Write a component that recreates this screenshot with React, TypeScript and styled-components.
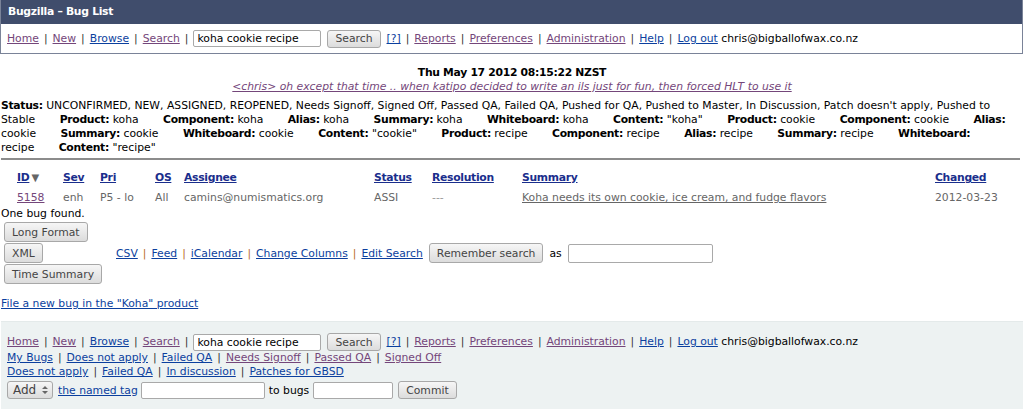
import React from 'react';
import styled, { createGlobalStyle } from 'styled-components';

const GlobalStyle = createGlobalStyle`
  body {
    margin: 0;
    background: #fff;
    font-family: "DejaVu Sans", Verdana, sans-serif;
    font-size: 10.8px;
    color: #000;
  }
`;

const Link = styled.a<{ $visited?: boolean; $bold?: boolean }>`
  color: ${({ $visited }) => ($visited ? '#74467a' : '#0b3f9e')};
  font-weight: ${({ $bold }) => ($bold ? 'bold' : 'normal')};
  letter-spacing: ${({ $bold }) => ($bold ? '-0.3px' : 'normal')};
  text-decoration: underline;
  cursor: pointer;
`;

const Sep = styled.span<{ $accent?: boolean }>`
  margin: 0 5px;
  color: ${({ $accent }) => ($accent ? '#b8692a' : '#333')};
`;

const Header = styled.div`
  border: 1px solid #7a8398;
  border-top: none;
  margin-right: 1px;
`;

const TitleBar = styled.div`
  background: #404d6c;
  color: #fff;
  font-weight: bold;
  letter-spacing: -0.3px;
  height: 24px;
  line-height: 24px;
  padding-left: 7px;
`;

const NavRow = styled.div`
  display: flex;
  align-items: center;
  height: 29px;
  padding-left: 6px;
  white-space: nowrap;
  background: #fff;
`;

const TextInput = styled.input<{ $w: number; $h?: number }>`
  box-sizing: border-box;
  width: ${({ $w }) => $w}px;
  height: ${({ $h }) => $h ?? 17}px;
  border: 1px solid #a9a9a9;
  border-radius: 2px;
  padding: 0 3px;
  font-family: "DejaVu Sans", Verdana, sans-serif;
  font-size: 10.8px;
  color: #000;
  background: #fff;
  outline: none;
`;

const Button = styled.button<{ $h?: number }>`
  box-sizing: border-box;
  height: ${({ $h }) => $h ?? 19}px;
  padding: 0 7px;
  border: 1px solid #a8a8a8;
  border-radius: 3px;
  background: linear-gradient(#f6f6f6, #dcdcdc);
  color: #444;
  font-family: "DejaVu Sans", Verdana, sans-serif;
  font-size: 10.8px;
  white-space: nowrap;
`;

const Gap = styled.span<{ $w: number }>`
  display: inline-block;
  width: ${({ $w }) => $w}px;
`;

const Main = styled.div`
  padding: 0 1px;
`;

const DateLine = styled.div`
  margin-top: 12px;
  text-align: center;
  font-weight: bold;
  letter-spacing: -0.3px;
  line-height: 14px;
`;

const Quote = styled.div`
  text-align: center;
  font-style: italic;
  line-height: 14px;
`;

const Description = styled.div`
  margin-top: 5px;
  line-height: 14px;
`;

// trailing margin travels with the value, like Bugzilla's inline list items
const Term = styled.span`
  margin-right: 21px;
`;

const Label = styled.b`
  letter-spacing: -0.3px;
`;

const Rule = styled.hr`
  margin: 3px 3px 0 0;
  border: none;
  border-top: 2px solid #8c8c8c;
`;

const BugTable = styled.div`
  display: grid;
  grid-template-columns: 46px 37px 55px 29px 190px 58px 90px 413px auto;
  grid-template-rows: 21px 19px;
  align-items: center;
  padding-left: 16px;
  margin-top: 7px;
`;

const HeadLink = styled(Link)`
  color: #1a2e8c;
`;

const Cell = styled.div<{ $muted?: boolean }>`
  color: ${({ $muted }) => ($muted ? '#999' : '#666')};
  white-space: nowrap;
`;

const SummaryLink = styled(Link)`
  color: #666;
`;

const SortArrow = styled.span`
  color: #666;
  font-size: 10px;
  margin-left: 2px;
`;

const Found = styled.div`
  line-height: 14px;
`;

const Actions = styled.div`
  display: grid;
  grid-template-columns: 112px auto;
  row-gap: 1px;
  margin: 1px 0 0 3px;
  align-items: center;
`;

const ActionButton = styled(Button)<{ $row: number }>`
  grid-column: 1;
  grid-row: ${({ $row }) => $row};
  justify-self: start;
  height: 20px;
`;

const FormatLinks = styled.div`
  grid-column: 2;
  grid-row: 2;
  display: flex;
  align-items: center;
  white-space: nowrap;
`;

const NewBug = styled.div`
  margin-top: 13px;
  line-height: 14px;
`;

const Footer = styled.div`
  margin: 10px 1px 0 1px;
  background: #edf2f2;
  border-top: 1px solid #e4eaea;
  padding: 11px 6px 10px 6px;
`;

const FooterLine = styled.div`
  line-height: 14px;
  white-space: nowrap;
`;

const FooterNav = styled(FooterLine)`
  display: flex;
  align-items: center;
  height: 18px;
`;

const TagRow = styled.div`
  display: flex;
  align-items: center;
  margin-top: 2px;
  white-space: nowrap;
`;

const Select = styled.div`
  box-sizing: border-box;
  width: 46px;
  height: 18px;
  border: 1px solid #a8a8a8;
  border-radius: 3px;
  background: linear-gradient(#f6f6f6, #dcdcdc);
  color: #444;
  font-size: 12px;
  display: flex;
  align-items: center;
  justify-content: space-between;
  padding: 0 4px 0 5px;
`;

type NavItem = { label: string; visited?: boolean };

const topLinks: NavItem[] = [
  { label: 'Home', visited: true },
  { label: 'New', visited: true },
  { label: 'Browse' },
  { label: 'Search', visited: true },
];

const restLinks: NavItem[] = [
  { label: '[?]' },
  { label: 'Reports', visited: true },
  { label: 'Preferences', visited: true },
  { label: 'Administration', visited: true },
  { label: 'Help' },
  { label: 'Log out' },
];

function LinkList({ items, accent }: { items: NavItem[]; accent?: boolean }) {
  return (
    <>
      {items.map((it, i) => (
        <React.Fragment key={it.label + i}>
          {i > 0 && <Sep $accent={accent}>|</Sep>}
          <Link $visited={it.visited}>{it.label}</Link>
        </React.Fragment>
      ))}
    </>
  );
}

function NavBar() {
  return (
    <>
      <LinkList items={topLinks} />
      <Sep>|</Sep>
      <TextInput $w={128} defaultValue="koha cookie recipe" />
      <Gap $w={6} />
      <Button $h={18}>Search</Button>
      <Gap $w={6} />
      <LinkList items={restLinks} />
      &nbsp;chris@bigballofwax.co.nz
    </>
  );
}

const terms: [string, string][] = [
  ['Status', "UNCONFIRMED, NEW, ASSIGNED, REOPENED, Needs Signoff, Signed Off, Passed QA, Failed QA, Pushed for QA, Pushed to Master, In Discussion, Patch doesn't apply, Pushed to Stable"],
  ['Product', 'koha'],
  ['Component', 'koha'],
  ['Alias', 'koha'],
  ['Summary', 'koha'],
  ['Whiteboard', 'koha'],
  ['Content', '"koha"'],
  ['Product', 'cookie'],
  ['Component', 'cookie'],
  ['Alias', 'cookie'],
  ['Summary', 'cookie'],
  ['Whiteboard', 'cookie'],
  ['Content', '"cookie"'],
  ['Product', 'recipe'],
  ['Component', 'recipe'],
  ['Alias', 'recipe'],
  ['Summary', 'recipe'],
  ['Whiteboard', 'recipe'],
  ['Content', '"recipe"'],
];

const columns = ['ID', 'Sev', 'Pri', 'OS', 'Assignee', 'Status', 'Resolution', 'Summary', 'Changed'];

function SelectArrows() {
  return (
    <svg width="6" height="10" viewBox="0 0 6 10">
      <path d="M0 4 L3 1 L6 4 Z M0 6 L3 9 L6 6 Z" fill="#666" />
    </svg>
  );
}

export default function App() {
  return (
    <>
      <GlobalStyle />
      <Header>
        <TitleBar>Bugzilla – Bug List</TitleBar>
        <NavRow>
          <NavBar />
        </NavRow>
      </Header>

      <Main>
        <DateLine>Thu May 17 2012 08:15:22 NZST</DateLine>
        <Quote>
          <Link $visited>
            &lt;chris&gt; oh except that time .. when katipo decided to write an ils just for fun, then forced HLT to use it
          </Link>
        </Quote>

        <Description>
          {terms.map(([k, v], i) => (
            <React.Fragment key={i}>
              <Term>
                <Label>{k}:</Label> {v}
              </Term>{' '}
            </React.Fragment>
          ))}
        </Description>
        <Rule />

        <BugTable>
          {columns.map((c) => (
            <div key={c}>
              <HeadLink $bold>{c}</HeadLink>
              {c === 'ID' && <SortArrow>▼</SortArrow>}
            </div>
          ))}
          <Cell>
            <Link $visited>5158</Link>
          </Cell>
          <Cell>enh</Cell>
          <Cell>P5 - lo</Cell>
          <Cell>All</Cell>
          <Cell>camins@numismatics.org</Cell>
          <Cell>ASSI</Cell>
          <Cell $muted>---</Cell>
          <Cell>
            <SummaryLink>Koha needs its own cookie, ice cream, and fudge flavors</SummaryLink>
          </Cell>
          <Cell>2012-03-23</Cell>
        </BugTable>

        <Found>One bug found.</Found>

        <Actions>
          <ActionButton $row={1}>Long Format</ActionButton>
          <ActionButton $row={2}>XML</ActionButton>
          <FormatLinks>
            <LinkList
              accent
              items={[{ label: 'CSV' }, { label: 'Feed' }, { label: 'iCalendar' }, { label: 'Change Columns' }, { label: 'Edit Search' }]}
            />
            <Gap $w={6} />
            <Button $h={20}>Remember search</Button>
            <Gap $w={6} />
            as
            <Gap $w={6} />
            <TextInput $w={145} $h={19} />
          </FormatLinks>
          <ActionButton $row={3}>Time Summary</ActionButton>
        </Actions>

        <NewBug>
          <Link>File a new bug in the "Koha" product</Link>
        </NewBug>
      </Main>

      <Footer>
        <FooterNav>
          <NavBar />
        </FooterNav>
        <FooterLine>
          <LinkList
            items={[
              { label: 'My Bugs' },
              { label: 'Does not apply' },
              { label: 'Failed QA' },
              { label: 'Needs Signoff', visited: true },
              { label: 'Passed QA', visited: true },
              { label: 'Signed Off', visited: true },
            ]}
          />
        </FooterLine>
        <FooterLine>
          <LinkList
            items={[{ label: 'Does not apply' }, { label: 'Failed QA' }, { label: 'In discussion' }, { label: 'Patches for GBSD' }]}
          />
        </FooterLine>
        <TagRow>
          <Select>
            Add
            <SelectArrows />
          </Select>
          <Gap $w={5} />
          <Link>the named tag</Link>
          <Gap $w={3} />
          <TextInput $w={124} $h={17} />
          <Gap $w={4} />
          to bugs
          <Gap $w={4} />
          <TextInput $w={80} $h={17} />
          <Gap $w={5} />
          <Button $h={18}>Commit</Button>
        </TagRow>
      </Footer>
    </>
  );
}
